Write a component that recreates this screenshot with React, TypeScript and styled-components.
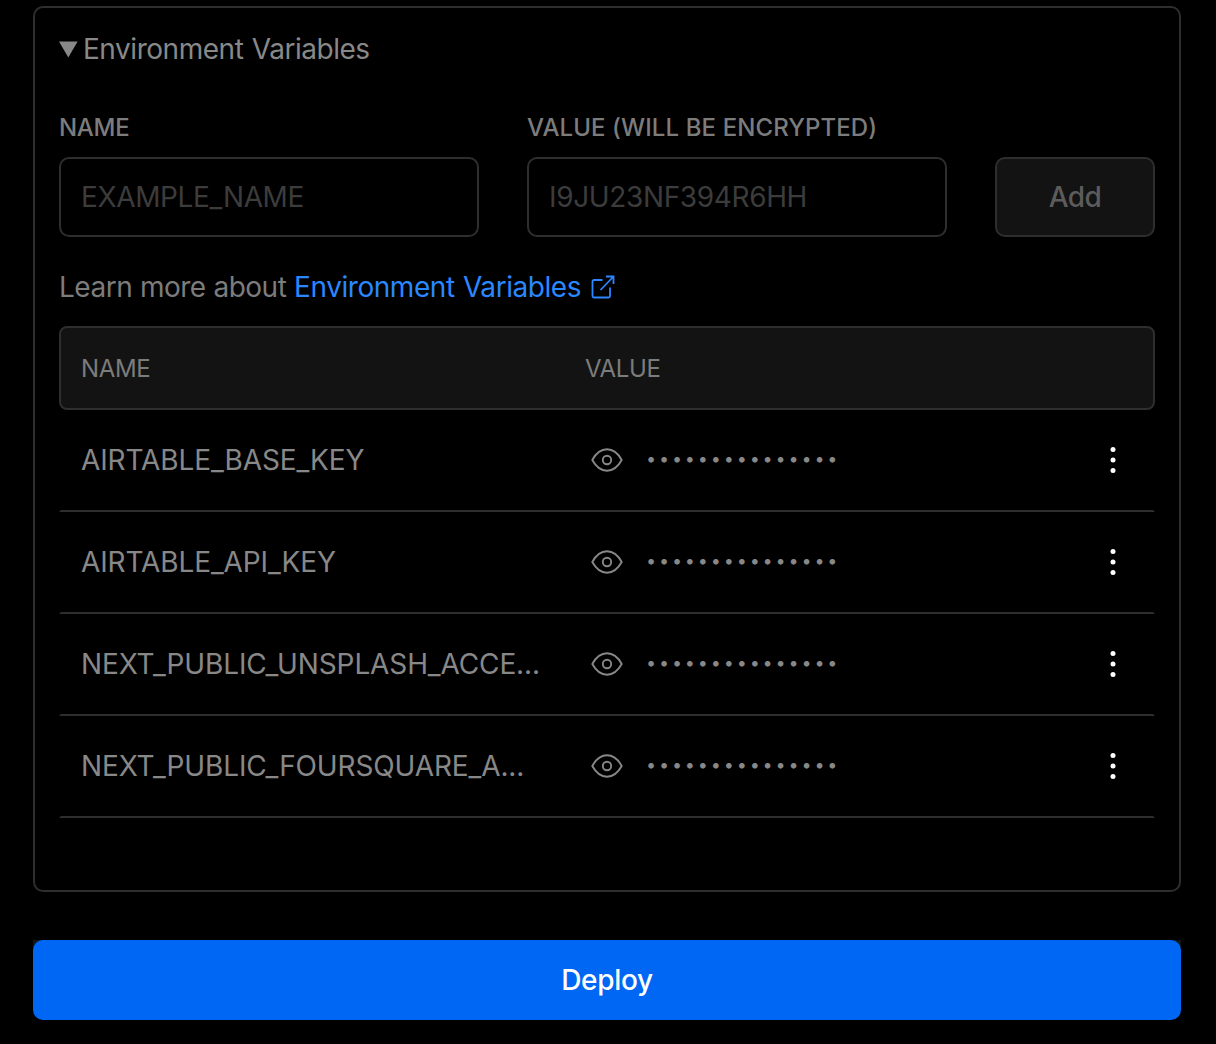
import React from 'react';
import styled, { createGlobalStyle } from 'styled-components';

const GlobalStyle = createGlobalStyle`
  * { box-sizing: border-box; }
  body {
    margin: 0;
    background: #000;
    color: #888;
    font-family: Inter, "Liberation Sans", sans-serif;
    font-size: 28px;
    line-height: 40px;
  }
`;

const Page = styled.main`
  padding: 6px 35px 24px 33px;
  height: 1044px;
  overflow: hidden;
`;

const Panel = styled.section`
  height: 886px;
  border: 2px solid #2e2e2e;
  border-radius: 10px;
  padding: 21px 24px 0;
`;

const Summary = styled.div`
  display: flex;
  align-items: center;
  gap: 5px;
  height: 40px;
  letter-spacing: -0.46px;
  word-spacing: 0.9px;
`;

const Form = styled.form`
  display: grid;
  grid-template-columns: 420px 420px 160px;
  column-gap: 48px;
  align-items: end;
  margin-top: 43px;
`;

const Field = styled.label`
  display: flex;
  flex-direction: column;
  gap: 13px;
`;

const Caption = styled.span<{ $tracking: string }>`
  height: 32px;
  line-height: 32px;
  font-size: 24px;
  font-weight: 500;
  letter-spacing: ${(p) => p.$tracking};
  color: #7c7c7c;
`;

const Input = styled.input`
  width: 100%;
  height: 80px;
  border: 2px solid #2e2e2e;
  border-radius: 10px;
  padding: 0 20px;
  background: #000;
  color: #fff;
  font: inherit;
  letter-spacing: -0.36px;
  outline: none;

  &::placeholder {
    color: #3c3c3c;
    opacity: 1;
  }
`;

const AddButton = styled.button`
  height: 80px;
  padding: 0;
  border: 2px solid #2e2e2e;
  border-radius: 10px;
  background: #131313;
  color: #5c5c5c;
  font: inherit;
  font-weight: 500;
  letter-spacing: -0.5px;
`;

const Note = styled.p`
  display: flex;
  align-items: center;
  margin: 30px 0 0;
  height: 40px;
  color: #7c7c7c;
  white-space: pre;
  letter-spacing: -0.5px;
  word-spacing: 0.4px;
`;

const Link = styled.a`
  display: flex;
  align-items: center;
  gap: 10px;
  color: #2b87ff;
  letter-spacing: -0.45px;
  word-spacing: 0.9px;
`;

const columns = `
  display: grid;
  grid-template-columns: 504px 1fr 40px;
  align-items: center;
  padding: 0 20px;
`;

const TableHead = styled.div`
  ${columns}
  height: 84px;
  margin-top: 19px;
  padding-top: 2px;
  border: 2px solid #2e2e2e;
  border-radius: 8px;
  background: #131313;
  color: #7c7c7c;
  font-size: 24px;
  letter-spacing: -0.33px;
`;

const TableRow = styled.div`
  ${columns}
  height: 102px;
  border: 0 solid transparent;
  border-width: 0 2px 2px;
  border-bottom-color: #2e2e2e;
`;

const VariableName = styled.span`
  white-space: nowrap;
  letter-spacing: -0.12px;
`;

const Secret = styled.span`
  display: flex;
  align-items: center;
  gap: 22px;
  padding-left: 5px;
`;

const Mask = styled.span`
  padding-bottom: 2px;
  font-size: 18px;
  letter-spacing: 2.83px;
  white-space: nowrap;
`;

/* The footer strip shows behind the upper corners of the button. */
const Footer = styled.footer`
  margin-top: 48px;
  background: linear-gradient(#161616 10px, transparent 10px);
`;

const Deploy = styled.button`
  display: block;
  width: 100%;
  height: 80px;
  padding: 0;
  border: 0;
  border-radius: 10px;
  background: #0067f4;
  color: #fff;
  font: inherit;
  font-weight: 500;
  letter-spacing: -0.3px;
`;

const Triangle = () => (
  <svg width="19" height="17" viewBox="0 0 19 17" fill="currentColor">
    <path d="M0 0.5h18.6L9.3 16.5z" />
  </svg>
);

const ExternalIcon = () => (
  <svg width="26" height="26" viewBox="0 0 26 26" fill="none" stroke="currentColor" strokeWidth="1.8">
    <path d="M11.500 6H3a1.500 1.500 0 0 0-1.500 1.500v14.500A1.500 1.500 0 0 0 3 23.500h14.500a1.500 1.500 0 0 0 1.500-1.500V13.500" />
    <path d="M15 2.500h7.500v7.500M22.500 2.500L9.500 16" />
  </svg>
);

const EyeIcon = () => (
  <svg width="34" height="28" viewBox="0 0 34 28" fill="none" stroke="currentColor" strokeWidth="1.9" strokeLinejoin="round">
    <path d="M2.300 14C5.600 8 10.600 3.300 17 3.300S28.400 8 31.700 14C28.400 20 23.400 24.700 17 24.700S5.600 20 2.300 14z" />
    <circle cx="17" cy="14" r="4.200" />
  </svg>
);

const MoreIcon = () => (
  <svg width="40" height="40" viewBox="0 0 40 40" fill="#fff">
    <circle cx="20" cy="9.500" r="2.500" />
    <circle cx="20" cy="20" r="2.500" />
    <circle cx="20" cy="30.500" r="2.500" />
  </svg>
);

const variables = [
  'AIRTABLE_BASE_KEY',
  'AIRTABLE_API_KEY',
  'NEXT_PUBLIC_UNSPLASH_ACCE...',
  'NEXT_PUBLIC_FOURSQUARE_A...',
];

export default function App() {
  return (
    <Page>
      <GlobalStyle />
      <Panel>
        <Summary>
          <Triangle />
          Environment Variables
        </Summary>
        <Form>
          <Field>
            <Caption $tracking="-0.3px">NAME</Caption>
            <Input placeholder="EXAMPLE_NAME" />
          </Field>
          <Field>
            <Caption $tracking="0.1px">VALUE (WILL BE ENCRYPTED)</Caption>
            <Input placeholder="I9JU23NF394R6HH" />
          </Field>
          <AddButton type="button">Add</AddButton>
        </Form>
        <Note>
          Learn more about{' '}
          <Link>
            Environment Variables
            <ExternalIcon />
          </Link>
        </Note>
        <TableHead>
          <span>NAME</span>
          <span>VALUE</span>
        </TableHead>
        {variables.map((name) => (
          <TableRow key={name}>
            <VariableName>{name}</VariableName>
            <Secret>
              <EyeIcon />
              <Mask>{'•'.repeat(15)}</Mask>
            </Secret>
            <MoreIcon />
          </TableRow>
        ))}
      </Panel>
      <Footer>
        <Deploy>Deploy</Deploy>
      </Footer>
    </Page>
  );
}
